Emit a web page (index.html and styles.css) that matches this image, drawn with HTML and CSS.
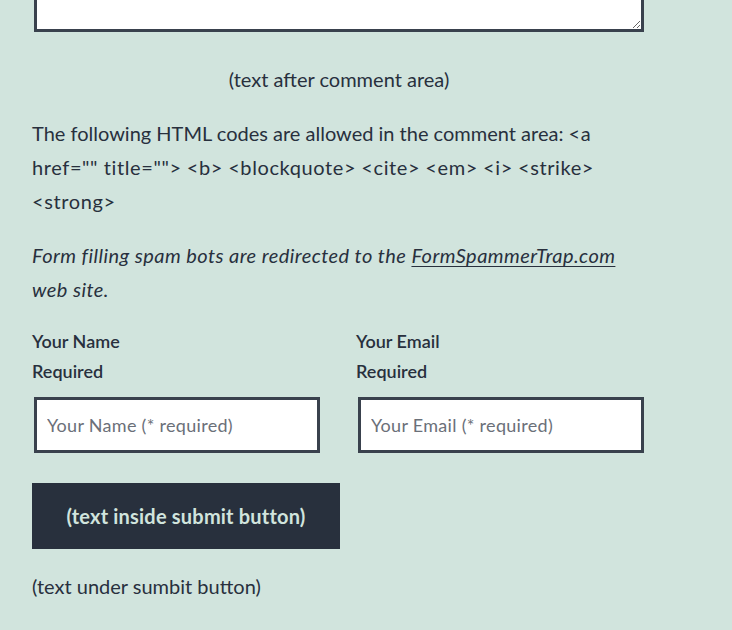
FILE: index.html
```html
<!DOCTYPE html>
<html lang="en">
<head>
<meta charset="utf-8">
<link rel="stylesheet" href="styles.css">
</head>
<body>
<div class="wrap">
  <textarea class="comment" aria-label="Comment"></textarea>
  <p class="after">(text after comment area)</p>
  <p class="allowed"><span>The following HTML codes are allowed in the comment area:</span> <span class="tag">&lt;a</span> <span class="tag">href="" title=""&gt;</span> <span class="tag">&lt;b&gt;</span> <span class="tag">&lt;blockquote&gt;</span> <span class="tag">&lt;cite&gt;</span> <span class="tag">&lt;em&gt;</span> <span class="tag">&lt;i&gt;</span> <span class="tag">&lt;strike&gt;</span> <span class="tag">&lt;strong&gt;</span></p>
  <p class="spam"><em><span>Form filling spam bots are redirected to the</span> <a href="#">FormSpammerTrap.com</a> <span>web site.</span></em></p>
  <div class="fields">
    <div class="field">
      <label class="label" for="n">Your Name<br>Required</label>
      <input id="n" class="input" type="text" placeholder="Your Name (* required)">
    </div>
    <div class="field">
      <label class="label" for="e">Your Email<br>Required</label>
      <input id="e" class="input" type="text" placeholder="Your Email (* required)">
    </div>
  </div>
  <button class="submit" type="button">(text inside submit button)</button>
  <p class="under">(text under sumbit button)</p>
</div>
</body>
</html>
```
FILE: styles.css
```css
html, body {
  margin: 0;
  padding: 0;
  background: #d1e4dd;
  color: #28303d;
  font-family: Lato, "Noto Sans", sans-serif;
  overflow: hidden;
}
.wrap {
  width: 614px;
  padding-left: 32px;
  font-size: 20px;
  line-height: 34px;
}
.comment {
  display: block;
  box-sizing: border-box;
  width: 610px;
  height: 92px;
  margin: -60px 2px 0;
  border: 3px solid #39414d;
  background: #fff;
  padding: 10px;
}
p { margin: 0; }
.after {
  text-align: center;
  margin-top: 30px;
}
.allowed { margin-top: 20px; }
.tag { letter-spacing: 0.6px; }
.spam { margin-top: 20px; letter-spacing: 0.45px; }
.spam a { color: #28303d; text-decoration: underline; text-underline-offset: 3px; text-decoration-thickness: 1px; }
.fields {
  display: flex;
  gap: 34px;
  margin-top: 20px;
}
.field { width: 290px; }
.label {
  display: block;
  font-size: 18px;
  line-height: 30px;
  font-weight: 600;
  margin-bottom: 11px;
}
.input {
  display: block;
  box-sizing: border-box;
  width: 286px;
  height: 56px;
  margin: 0 2px;
  border: 3px solid #39414d;
  border-radius: 0;
  background: #fff;
  padding: 0 10px;
  font-family: inherit;
  font-size: 18px;
  letter-spacing: 0.3px;
  color: #28303d;
  outline: none;
}
.input::placeholder { color: #6b7079; opacity: 1; }
.submit {
  display: block;
  margin-top: 30px;
  width: 308px;
  height: 66px;
  border: 0;
  background: #28303d;
  color: #d1e4dd;
  font-family: inherit;
  font-size: 20px;
  font-weight: 700;
  letter-spacing: 0.2px;
  padding: 0;
}
.under { margin-top: 20px; }
```
